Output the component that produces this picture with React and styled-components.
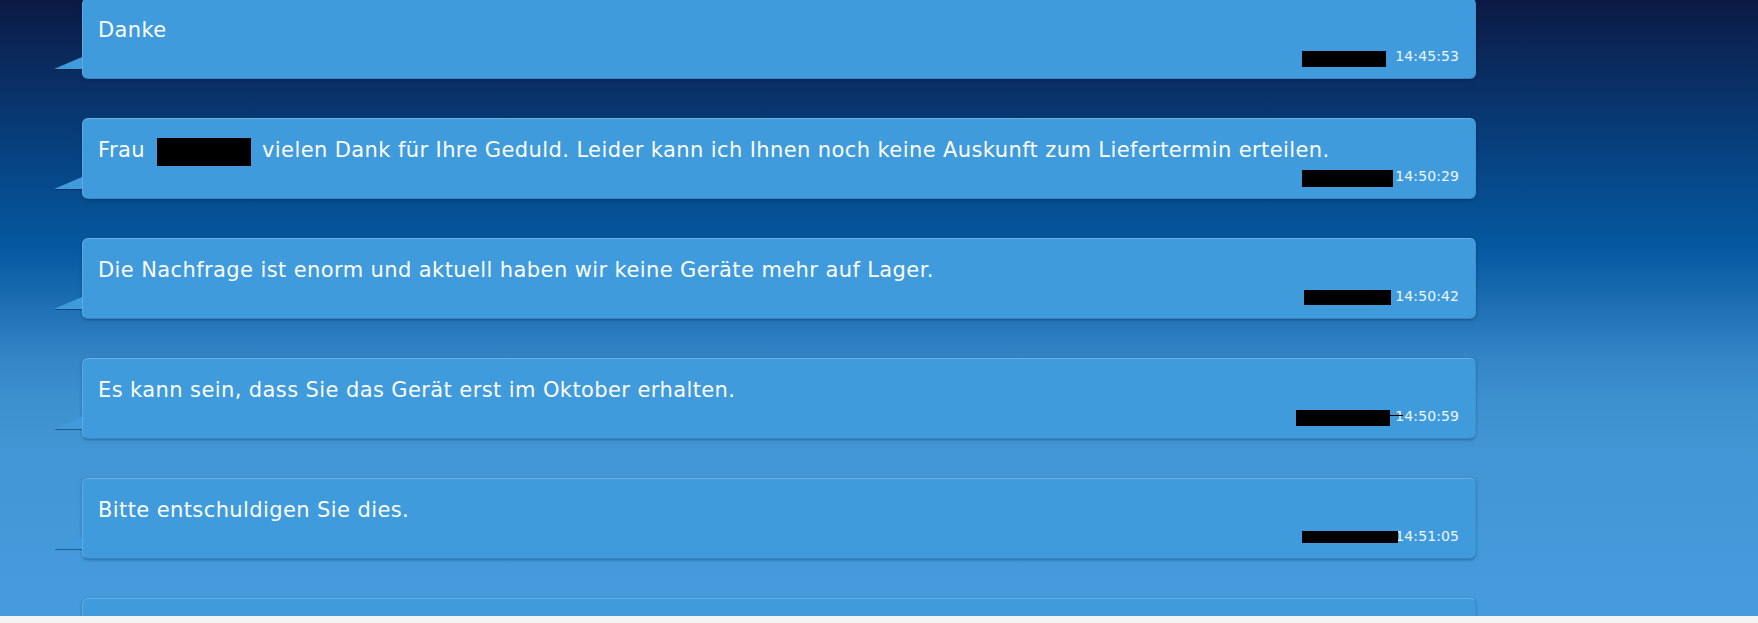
import React from "react"
import styled, { createGlobalStyle } from "styled-components"

const GlobalStyle = createGlobalStyle`
  html, body {
    margin: 0;
    padding: 0;
    background: #f4f4f4;
  }
  body {
    font-family: "DejaVu Sans", Verdana, sans-serif;
  }
`

const ChatPanel = styled.div`
  height: 616px;
  overflow: hidden;
  background: linear-gradient(
    to bottom,
    #0b1943 0px,
    #0a2a5c 60px,
    #09336b 100px,
    #064686 170px,
    #0558a0 246px,
    #1265aa 280px,
    #2474b8 318px,
    #3385c6 357px,
    #3d90ce 397px,
    #4295d3 440px,
    #4498d8 520px,
    #459cdd 616px
  );
`

const MessageList = styled.div`
  display: flex;
  flex-direction: column;
  gap: 39px;
  margin-top: -2px;
  padding-left: 82px;
`

const Bubble = styled.div`
  position: relative;
  box-sizing: border-box;
  width: 1394px;
  padding: 19px 16px 14px 15px;
  background: #3f9bdc;
  border: 1px solid;
  border-color: rgba(255, 255, 255, 0.22) rgba(0, 0, 0, 0.04) rgba(0, 0, 0, 0.12)
    rgba(255, 255, 255, 0.16);
  border-radius: 6px;
  box-shadow: 0 1px 3px rgba(0, 20, 60, 0.35);

  &::before {
    content: "";
    position: absolute;
    left: -29px;
    bottom: 9px;
    width: 0;
    height: 0;
    border-style: solid;
    border-width: 0 0 12px 28px;
    border-color: transparent transparent #3f9bdc transparent;
    filter: drop-shadow(0 1px 0 rgba(0, 20, 60, 0.45));
  }
`

const Text = styled.div`
  margin: 0 0 6px;
  font-size: 21px;
  line-height: 24px;
  letter-spacing: 0.4px;
  color: #fbfdff;
  white-space: nowrap;
`

const NameRedact = styled.span`
  display: inline-block;
  vertical-align: top;
  width: 94px;
  height: 28px;
  margin: 0 4px -4px 12px;
  background: #000;
`

const Meta = styled.div`
  font-size: 14px;
  line-height: 16px;
  text-align: right;
  color: #eef6fc;
  letter-spacing: 0.1px;
`

const Redact = styled.span`
  position: absolute;
  right: ${(p) => p.$right}px;
  top: ${(p) => p.$top}px;
  width: ${(p) => p.$width}px;
  height: ${(p) => p.$height}px;
  background: #000;
`

const messages = [
  {
    text: "Danke",
    time: "14:45:53",
    redacts: [{ right: 89, top: 52, width: 84, height: 16 }],
  },
  {
    name: true,
    text: " vielen Dank für Ihre Geduld. Leider kann ich Ihnen noch keine Auskunft zum Liefertermin erteilen.",
    time: "14:50:29",
    redacts: [{ right: 82, top: 51, width: 91, height: 17 }],
  },
  {
    text: "Die Nachfrage ist enorm und aktuell haben wir keine Geräte mehr auf Lager.",
    time: "14:50:42",
    redacts: [{ right: 84, top: 51, width: 87, height: 15 }],
  },
  {
    text: "Es kann sein, dass Sie das Gerät erst im Oktober erhalten.",
    time: "14:50:59",
    redacts: [
      { right: 85, top: 51, width: 94, height: 16 },
      { right: 72, top: 56, width: 14, height: 1 },
    ],
  },
  {
    text: "Bitte entschuldigen Sie dies.",
    time: "14:51:05",
    redacts: [{ right: 77, top: 52, width: 96, height: 12 }],
  },
  {
    text: "\u00a0",
    time: "",
    redacts: [],
  },
]

const App = () => {
  return (
    <>
      <GlobalStyle />
      <ChatPanel>
        <MessageList>
          {messages.map((m, i) => (
            <Bubble key={i}>
              <Text>
                {m.name && (
                  <>
                    Frau
                    <NameRedact />
                  </>
                )}
                {m.text}
              </Text>
              <Meta>{m.time || "\u00a0"}</Meta>
              {m.redacts.map((r, j) => (
                <Redact
                  key={j}
                  $right={r.right}
                  $top={r.top}
                  $width={r.width}
                  $height={r.height}
                />
              ))}
            </Bubble>
          ))}
        </MessageList>
      </ChatPanel>
    </>
  )
}

export default App
